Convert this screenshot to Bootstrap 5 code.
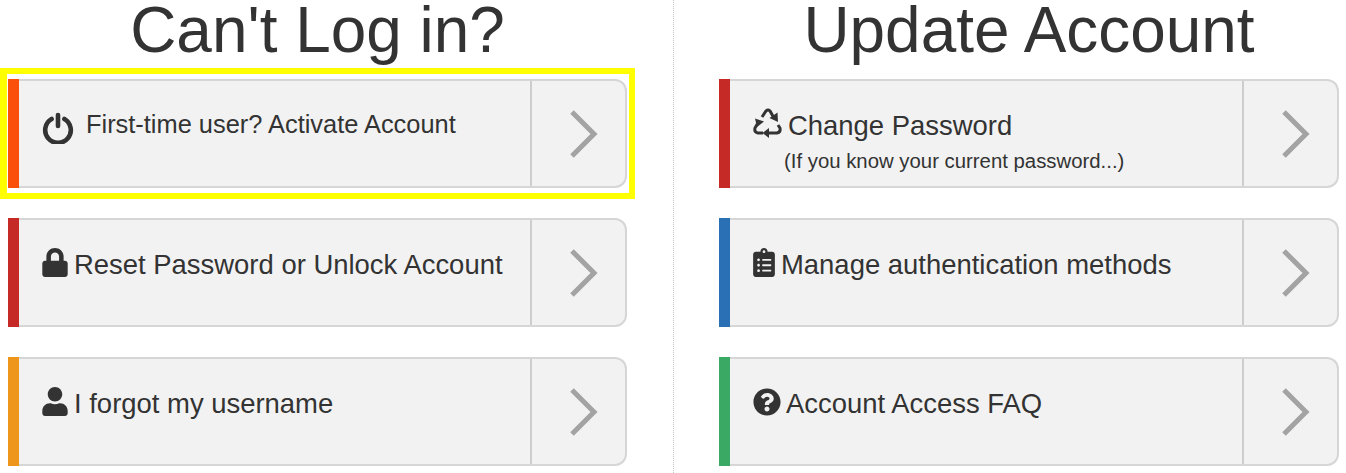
<!DOCTYPE html>
<html lang="en">
<head>
<meta charset="utf-8">
<title>Account</title>
<link href="https://cdn.jsdelivr.net/npm/bootstrap@5.3.0/dist/css/bootstrap.min.css" rel="stylesheet">
<style>
html,body{height:473px;overflow:hidden;background:#fff}
body{font-family:"Liberation Sans",Arial,sans-serif;color:#333}
.pane{height:473px;flex:none}
.pane-left{width:674px;padding:0 46px 0 8px;border-right:1px dotted #c4c4c4}
.pane-right{width:672px;padding:0 7px 0 45px}
.pane-title{font-family:"Liberation Sans",Arial,sans-serif;font-size:63.9px;line-height:60px;height:79px;margin:0;text-align:center;color:#333;font-weight:400}
.act{height:109px;margin-bottom:30px;background:#f2f2f2;border:2px solid #d6d6d6;border-left:0;border-radius:0 12px 12px 0;text-decoration:none;color:#333}
.accent{width:11px;flex:none;margin:-2px 0}
.act-body{min-width:0;padding:27px 0 0 23px;font-size:27.45px;line-height:36px;white-space:nowrap}
.act-go{width:95px;flex:none;border-left:2px solid #cdcdcd;padding-left:36px}
.act-go svg{display:block}
.ic{display:inline-block;vertical-align:-3px;fill:#333;height:29px;margin-right:6px}
.sub{display:block;font-size:20.35px;line-height:28px;margin:3px 0 0 31px}
.narrow{font-size:25.4px;padding-top:25px}
.hilite{border:solid #ff0;border-width:6px 6px 6px 7px;margin:-11px -8px 19px -8px;padding:5px 2px 5px 1px}
.hilite .act{margin:0}
</style>
</head>
<body>
<main class="d-flex">
<section class="pane pane-left">
<h1 class="pane-title">Can't Log in?</h1>
<div class="hilite">
<a class="act d-flex" href="#"><span class="accent" style="background:#fb4f0c"></span>
<span class="act-body flex-grow-1 narrow"><svg class="ic" style="width:32px;height:32px;vertical-align:-11px;margin-right:12px" viewBox="0 0 32 32"><path d="M9.6 7a12.8 12.8 0 1 0 12.800 0" fill="none" stroke="#333" stroke-width="4.600" stroke-linecap="round"/><path d="M16 3v11" fill="none" stroke="#333" stroke-width="4.600" stroke-linecap="round"/></svg>First-time user? Activate Account</span>
<span class="act-go d-flex align-items-center"><svg width="30" height="52" viewBox="0 0 30 52"><path d="M4 4l22 22L4 48" fill="none" stroke="#a3a3a3" stroke-width="5"/></svg></span></a>
</div>
<a class="act d-flex" href="#"><span class="accent" style="background:#c62a27"></span>
<span class="act-body flex-grow-1"><svg class="ic" style="width:26px" viewBox="0 0 448 512"><path d="M400 224h-24v-72C376 68.200 307.800 0 224 0S72 68.200 72 152v72H48c-26.500 0-48 21.500-48 48v192c0 26.500 21.500 48 48 48h352c26.500 0 48-21.500 48-48V272c0-26.500-21.500-48-48-48zm-104 0H152v-72c0-39.700 32.300-72 72-72s72 32.300 72 72v72z"/></svg>Reset Password or Unlock Account</span>
<span class="act-go d-flex align-items-center"><svg width="30" height="52" viewBox="0 0 30 52"><path d="M4 4l22 22L4 48" fill="none" stroke="#a3a3a3" stroke-width="5"/></svg></span></a>
<a class="act d-flex" href="#"><span class="accent" style="background:#ee951b"></span>
<span class="act-body flex-grow-1"><svg class="ic" style="width:26px" viewBox="0 0 448 512"><path d="M224 256c70.700 0 128-57.300 128-128S294.700 0 224 0 96 57.300 96 128s57.300 128 128 128zm89.600 32h-16.700c-22.200 10.200-46.900 16-72.900 16s-50.600-5.800-72.900-16h-16.700C60.200 288 0 348.200 0 422.400V464c0 26.500 21.500 48 48 48h352c26.500 0 48-21.500 48-48v-41.600c0-74.200-60.200-134.400-134.400-134.400z"/></svg>I forgot my username</span>
<span class="act-go d-flex align-items-center"><svg width="30" height="52" viewBox="0 0 30 52"><path d="M4 4l22 22L4 48" fill="none" stroke="#a3a3a3" stroke-width="5"/></svg></span></a>
</section>
<section class="pane pane-right">
<h1 class="pane-title">Update Account</h1>
<a class="act d-flex" href="#"><span class="accent" style="background:#c62a27"></span>
<span class="act-body flex-grow-1"><svg class="ic" style="width:30px;height:30px;margin-right:5px;vertical-align:-3px" viewBox="0 0 30 30"><g fill="none" stroke="#333" stroke-width="3"><path d="M9 9l4-6q2-2 4 0l4 7"/><path d="M6 13l-4 7q-1 4 3 5h5"/><path d="M15 25h9q4-1 3-5l-2-3"/></g><path d="M24.500 4.500l.5 9.500-8.500-4zM2 10.500l9 3-7 5.500zM16 20v10l-6.500-5z"/></svg>Change Password<span class="sub">(If you know your current password...)</span></span>
<span class="act-go d-flex align-items-center"><svg width="30" height="52" viewBox="0 0 30 52"><path d="M4 4l22 22L4 48" fill="none" stroke="#a3a3a3" stroke-width="5"/></svg></span></a>
<a class="act d-flex" href="#"><span class="accent" style="background:#2a70b5"></span>
<span class="act-body flex-grow-1"><svg class="ic" style="width:22px" viewBox="0 0 384 512"><path d="M336 64h-80c0-35.300-28.700-64-64-64s-64 28.700-64 64H48C21.500 64 0 85.500 0 112v352c0 26.500 21.500 48 48 48h288c26.500 0 48-21.500 48-48V112c0-26.500-21.500-48-48-48zM96 424c-13.300 0-24-10.700-24-24s10.700-24 24-24 24 10.700 24 24-10.700 24-24 24zm0-96c-13.300 0-24-10.700-24-24s10.700-24 24-24 24 10.700 24 24-10.700 24-24 24zm0-96c-13.300 0-24-10.700-24-24s10.700-24 24-24 24 10.700 24 24-10.700 24-24 24zm96-192c13.300 0 24 10.700 24 24s-10.700 24-24 24-24-10.700-24-24 10.700-24 24-24zm128 368c0 4.400-3.600 8-8 8H168c-4.400 0-8-3.600-8-8v-16c0-4.400 3.600-8 8-8h144c4.400 0 8 3.600 8 8v16zm0-96c0 4.400-3.600 8-8 8H168c-4.400 0-8-3.600-8-8v-16c0-4.400 3.600-8 8-8h144c4.400 0 8 3.600 8 8v16zm0-96c0 4.400-3.600 8-8 8H168c-4.400 0-8-3.600-8-8v-16c0-4.400 3.600-8 8-8h144c4.400 0 8 3.600 8 8v16z"/></svg>Manage authentication methods</span>
<span class="act-go d-flex align-items-center"><svg width="30" height="52" viewBox="0 0 30 52"><path d="M4 4l22 22L4 48" fill="none" stroke="#a3a3a3" stroke-width="5"/></svg></span></a>
<a class="act d-flex" href="#"><span class="accent" style="background:#3aa964"></span>
<span class="act-body flex-grow-1"><svg class="ic" style="width:28px;height:28px;margin-right:5px" viewBox="0 0 512 512"><path d="M504 256c0 136.997-111.043 248-248 248S8 392.997 8 256C8 119.083 119.043 8 256 8s248 111.083 248 248zM262.655 90c-54.497 0-89.255 22.957-116.549 63.758-3.536 5.286-2.353 12.415 2.715 16.258l34.699 26.310c5.205 3.947 12.621 3.008 16.665-2.122 17.864-22.658 30.113-35.797 57.303-35.797 20.429 0 45.698 13.148 45.698 32.958 0 14.976-12.363 22.667-32.534 33.976C247.128 238.528 216 254.941 216 296v4c0 6.627 5.373 12 12 12h56c6.627 0 12-5.373 12-12v-1.333c0-28.462 83.186-29.647 83.186-106.667 0-58.002-60.165-102-116.531-102zM256 338c-25.365 0-46 20.635-46 46 0 25.364 20.635 46 46 46s46-20.636 46-46c0-25.365-20.635-46-46-46z"/></svg>Account Access FAQ</span>
<span class="act-go d-flex align-items-center"><svg width="30" height="52" viewBox="0 0 30 52"><path d="M4 4l22 22L4 48" fill="none" stroke="#a3a3a3" stroke-width="5"/></svg></span></a>
</section>
</main>
<script src="https://cdn.jsdelivr.net/npm/bootstrap@5.3.0/dist/js/bootstrap.bundle.min.js"></script>
</body>
</html>
